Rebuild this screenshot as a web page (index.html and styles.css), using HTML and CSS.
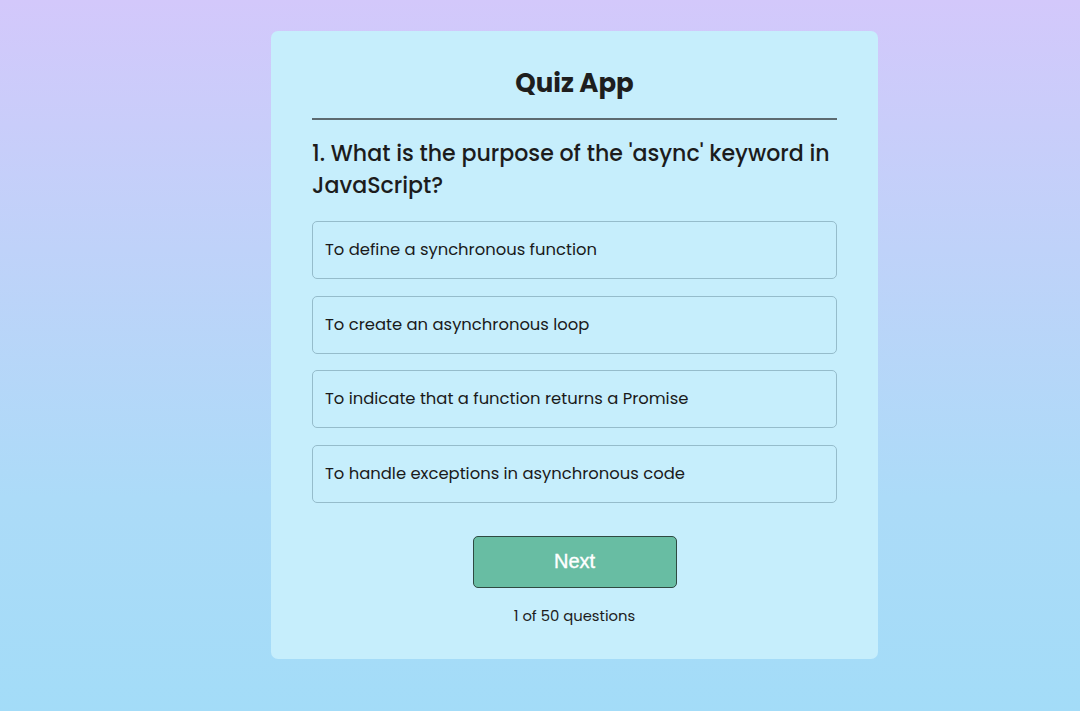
FILE: index.html
```html
<!DOCTYPE html>
<html lang="en">
<head>
<meta charset="utf-8">
<title>Quiz App</title>
<link rel="stylesheet" href="styles.css">
</head>
<body>
<main class="quiz">
  <h1 class="quiz-title">Quiz App</h1>
  <hr class="quiz-rule">
  <h2 class="question">1. What is the purpose of the 'async' keyword in JavaScript?</h2>
  <ul class="options">
    <li class="option">To define a synchronous function</li>
    <li class="option">To create an asynchronous loop</li>
    <li class="option">To indicate that a function returns a Promise</li>
    <li class="option">To handle exceptions in asynchronous code</li>
  </ul>
  <button class="next-btn" type="button">Next</button>
  <p class="progress">1 of 50 questions</p>
</main>
</body>
</html>
```

FILE: styles.css
```css
* { box-sizing: border-box; }
html, body { height: 100%; }
body {
  margin: 0;
  font-family: "Poppins", "Inter", "Noto Sans", sans-serif;
  color: #1c1c1c;
  background: linear-gradient(180deg, #d3c8fb 0%, #bfd2f9 35%, #acdbf8 70%, #a3dcf8 100%);
  padding: 31px 0 0 271px;
}
.quiz {
  width: 607px;
  height: 628px;
  background: #c6eefc;
  border-radius: 7px;
  padding: 32px 41px 32px;
  display: flex;
  flex-direction: column;
}
.quiz-title {
  margin: 0;
  text-align: center;
  font-size: 26px;
  line-height: 40px;
  font-weight: 700;
  color: #1e1e1e;
}
.quiz-rule {
  margin: 15px 0 0;
  border: 0;
  height: 2px;
  background: #5c6a70;
}
.question {
  margin: 18px 0 0;
  font-size: 22.1px;
  line-height: 32px;
  font-weight: 500;
  color: #1c1c1c;
}
.options {
  list-style: none;
  margin: 19px 0 0;
  padding: 0;
  display: flex;
  flex-direction: column;
  gap: 16.67px;
}
.option {
  height: 58px;
  border: 1px solid #95bccb;
  border-radius: 5px;
  padding: 0 12px 1px;
  display: flex;
  align-items: center;
  font-size: 16.4px;
  color: #1a1a1a;
}
.next-btn {
  align-self: center;
  margin-top: 33px;
  width: 204px;
  height: 52px;
  background: #68bda3;
  border: 1px solid #2f4a42;
  border-radius: 5px;
  color: #ffffff;
  font-family: "Liberation Sans", Arial, sans-serif;
  font-size: 20px;
  -webkit-text-stroke: 0.4px #ffffff;
  padding: 0;
}
.progress {
  margin: 17px 0 0;
  text-align: center;
  font-size: 14.8px;
  line-height: 22px;
  color: #1c1c1c;
}
```
